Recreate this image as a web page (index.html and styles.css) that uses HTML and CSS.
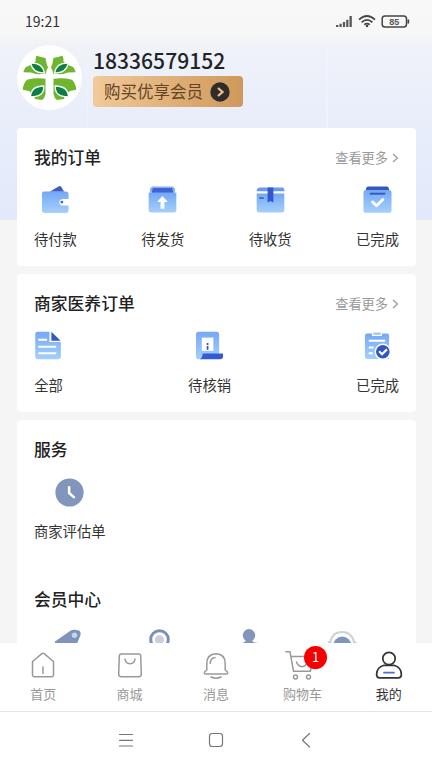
FILE: index.html
```html
<!DOCTYPE html>
<html lang="zh-CN">
<head>
<meta charset="utf-8">
<title>我的</title>
<link rel="stylesheet" href="styles.css">
</head>
<body>
<svg width="0" height="0" class="defs">
  <defs>
    <linearGradient id="blue" x1="0" y1="0" x2="0" y2="1"><stop offset="0" stop-color="#74a8f5"/><stop offset="1" stop-color="#a6d0fa"/></linearGradient>
    <g id="leaves">
      <path fill="#6fb52e" d="M19.500 10.700Q24 12 28.500 13Q29 18 31 22.500L29.500 25.500L29 28.500Q23 29.500 19 29L14 27.500L6.300 27.300Q7 24 9 22L15 19.500L18.500 16.500Q18 13 19.500 10.700Z"/>
      <path fill="#0b8045" stroke="#fff" stroke-width="1.300" d="M13.500 18Q25.500 17.500 27.500 27.800Q16.500 29 13.500 18Z"/>
      <path fill="#6fb52e" d="M28.500 33.700V49Q28 53 25 55L18 54Q17 49 12 46L5.700 44.700Q6.500 38 10 34.700Q18 32.500 28.500 33.700Z"/>
      <path fill="#0b8045" stroke="#fff" stroke-width="1.300" d="M26.800 41Q27.500 52 13.500 51.800Q14 41 26.800 41Z"/>
    </g>
  </defs>
</svg>
<div class="app">
  <header class="hero">
    <div class="status">
      <span class="time">19:21</span>
      <svg class="status-icons" width="76" height="16" viewBox="0 0 76 16">
        <g fill="#555"><path d="M1 14v-2h2.400v2zM4.500 14v-3.200h2.200V14zM7.900 14V9h2.200v5zM11.200 14V6.800h2.200V14zM14.500 14V3h2.300v11z"/></g>
        <g fill="none" stroke="#444" stroke-width="1.700"><path d="M24 6.600Q32-.6 40 6.600M26.600 9.300Q32 4.600 37.400 9.300M29.200 11.700Q32 9.500 34.800 11.700"/><rect x="47.200" y="3" width="24.300" height="11" rx="2.800" stroke-width="1.500"/></g>
        <circle cx="32" cy="13" r="1.300" fill="#444"/><rect x="72.500" y="6.500" width="1.700" height="4" fill="#444"/>
        <text x="59.300" y="11.700" class="battery">85</text>
      </svg>
    </div>
    <div class="profile">
      <svg class="avatar" width="66" height="66" viewBox="0 0 66 66">
        <circle cx="32.500" cy="32.700" r="32.500" fill="#fff"/>
        <use href="#leaves"/>
        <use href="#leaves" transform="matrix(-1 0 0 1 65 0)"/>
      </svg>
      <div class="identity">
        <div class="phone">18336579152</div>
        <div class="vip"><span>购买优享会员</span>
          <svg width="20" height="20" viewBox="0 0 20 20"><circle cx="10" cy="10" r="9.700" fill="#2e2c2b"/><path d="M8 6l4.500 4L8 14" fill="none" stroke="#ecc08a" stroke-width="2.300"/></svg>
        </div>
      </div>
    </div>
  </header>
  <main class="content">
    <section class="card">
      <div class="head"><h2>我的订单</h2><div class="more">查看更多<svg width="7" height="10" viewBox="0 0 7 10"><path d="M1 1l4.500 4L1 9" fill="none" stroke="#999" stroke-width="1.200"/></svg></div></div>
      <div class="items">
        <div class="item">
          <svg width="30" height="30" viewBox="0 0 30 30"><path fill="#3f5dbb" d="M9 7L18.500 1.300Q20 .7 21 2L24 7Z"/><path fill="url(#blue)" d="M3 6.800H26Q28.500 7 28.500 9.500V14.500H22.500Q19 15 19 17.800Q19 21 22.500 21.200H28.500V26.500Q28.500 29 26 29H3.500Q1 29 1 26.500V9Q1 6.800 3 6.800Z"/><circle cx="21.600" cy="17.700" r="1.500" fill="#4267b5"/></svg>
          <span>待付款</span>
        </div>
        <div class="item">
          <svg width="30" height="30" viewBox="0 0 30 30"><path fill="#3f63d5" d="M4 2H26V9H4Z"/><path fill="#89b3f6" d="M4 1.500H26L28 4V9H2V4ZM5 3L3.800 8H26.200L25 3Z" fill-rule="evenodd"/><path fill="url(#blue)" d="M.7 8H29.300V26.500Q29.300 28.500 27 28.500H3Q.7 28.500.7 26.500Z"/><path fill="#fff" d="M15 11.500L20.500 17.500H17V24.500H13V17.500H9.500Z"/></svg>
          <span>待发货</span>
        </div>
        <div class="item">
          <svg width="30" height="30" viewBox="0 0 30 30"><path fill="#699af0" d="M3 2.500H27Q29.500 2.500 29.500 6.500H.5Q.5 3.500 3 2.500Z"/><path fill="url(#blue)" d="M.7 8.700H29.300V26Q29.300 28.500 27 28.500H3Q.7 28.500.7 26Z"/><path fill="#3456cf" d="M12 2.500H18V18L15 16.500L12 18Z"/><path stroke="#3e64c9" stroke-width="1.800" d="M3.300 13.500H8"/></svg>
          <span>待收货</span>
        </div>
        <div class="item">
          <svg width="30" height="30" viewBox="0 0 30 30"><path fill="#3456bd" d="M5 1.500H25Q27 2 27 6H3Q3 2 5 1.500Z"/><path fill="url(#blue)" d="M3 5.200H27Q29.500 5.200 29.500 8V26Q29.500 28.800 27 28.800H3Q.5 28.800.5 26V8Q.5 5.200 3 5.200Z"/><path stroke="#315ac1" stroke-width="2" d="M7 9H23"/><path fill="none" stroke="#fff" stroke-width="3" stroke-linecap="round" stroke-linejoin="round" d="M9.800 17.500L14 21.500L20.500 15"/></svg>
          <span>已完成</span>
        </div>
      </div>
    </section>
    <section class="card">
      <div class="head"><h2>商家医养订单</h2><div class="more">查看更多<svg width="7" height="10" viewBox="0 0 7 10"><path d="M1 1l4.500 4L1 9" fill="none" stroke="#999" stroke-width="1.200"/></svg></div></div>
      <div class="items">
        <div class="item">
          <svg width="30" height="30" viewBox="0 0 30 30"><path fill="url(#blue)" d="M3.500.7H16V11.500H27.800V26.500Q27.800 29.300 25 29.300H4Q1.300 29.300 1.300 26.500V3Q1.300.7 3.500.7Z"/><path fill="#3657c4" d="M18 .8L27.500 10.200H18Z"/><path stroke="#fff" stroke-width="2.200" d="M4.500 9H13.500M4.500 16.300H23M4.500 23H23"/></svg>
          <span>全部</span>
        </div>
        <div class="item">
          <svg width="30" height="30" viewBox="0 0 30 30"><path fill="url(#blue)" d="M4 .7H22Q25 .7 25 4V25H8L6 29.300H4Q1 29 1 26V4Q1 .7 4 .7Z"/><path fill="#fff" d="M7 6.800H19V20.500H7Z"/><path fill="#355ad6" d="M8 23.200H29V27Q28.500 29.300 26 29.300H5Q7.500 28 8 23.200Z"/><path stroke="#3950a9" stroke-width="1.800" d="M13 12.500v2M13 15.500v4"/></svg>
          <span>待核销</span>
        </div>
        <div class="item">
          <svg width="30" height="30" viewBox="0 0 30 30"><path fill="url(#blue)" d="M4 2.500H25Q27 2.500 27 5V29H4Q2 29 2 26.500V5Q2 2.500 4 2.500Z"/><path fill="#9fc3f8" stroke="#fff" stroke-width="1.200" d="M10 1h9v3.500h-9z"/><path stroke="#fff" stroke-width="2" d="M6 10H23M6 17H11M6 23H10"/><circle cx="20.500" cy="21.500" r="7.800" fill="#3155c6" stroke="#fff" stroke-width="1.500"/><path fill="none" stroke="#fff" stroke-width="2.200" d="M16.700 21L19.700 24L24.800 19"/></svg>
          <span>已完成</span>
        </div>
      </div>
    </section>
    <section class="card services">
      <div class="head"><h2>服务</h2></div>
      <div class="items">
        <div class="item">
          <svg width="30" height="30" viewBox="0 0 30 30"><circle cx="15" cy="15" r="14.600" fill="#8295ba"/><path fill="none" stroke="#fff" stroke-width="2.600" stroke-linecap="round" stroke-linejoin="round" d="M14.600 9.500V15.500L19.500 19.800"/></svg>
          <span>商家评估单</span>
        </div>
      </div>
      <div class="head member-head"><h2>会员中心</h2></div>
      <div class="members">
        <svg width="30" height="30" viewBox="0 0 30 30"><path fill="#8094ba" d="M1 12.500L16 2Q18 .6 21 .8L25 1.500Q27.300 3 26.500 6L24.500 11L17 29H1Z"/><circle cx="20.500" cy="6.200" r="2.700" fill="#c4d5ef"/></svg>
        <svg width="30" height="30" viewBox="0 0 30 30"><circle cx="14.500" cy="10.500" r="8.800" fill="#fff" stroke="#7b90b8" stroke-width="3"/><circle cx="14.500" cy="10.800" r="4.500" fill="#c9cde0"/></svg>
        <svg width="30" height="30" viewBox="0 0 30 30"><path fill="#b8c3d8" d="M5 14.200Q7 13 12 12.700Q19 12.700 23 14.200V28H5Z"/><path fill="#8296bc" d="M7 14.200Q9 13 10 11H16Q17 13 19 14.200V25H7Z"/><circle cx="13" cy="6.300" r="6.200" fill="#8296bc"/></svg>
        <svg width="30" height="30" viewBox="0 0 30 30"><path d="M3 16Q4 3 15 3Q26 3 27.500 16" fill="none" stroke="#ced1d6" stroke-width="2"/><circle cx="15.300" cy="16.500" r="9" fill="#8195bb"/><path fill="#c5cad5" d="M1 12.500H4V22H1ZM26.500 12.500h3v9h-3z"/></svg>
      </div>
    </section>
  </main>
  <nav class="tabs">
    <div class="tab">
      <svg width="30" height="30" viewBox="0 0 30 30"><path d="M4.500 11.500Q4.500 10.500 5.500 9.700L13.800 2.600Q15 1.700 16.200 2.600L24.500 9.700Q25.500 10.500 25.500 11.500V24Q25.500 25.700 23.800 25.700H6.200Q4.500 25.700 4.500 24ZM15 16V22.500"/></svg>
      <span>首页</span>
    </div>
    <div class="tab">
      <svg width="30" height="30" viewBox="0 0 30 30"><path d="M6.500 3H23.500Q25.500 3 25.700 5L26.300 23Q26.300 25.700 23.800 25.700H6.200Q3.700 25.700 3.700 23L4.300 5Q4.500 3 6.500 3ZM10 8Q10.500 12.500 15 12.700Q19.500 12.500 20 8"/></svg>
      <span>商城</span>
    </div>
    <div class="tab">
      <svg width="30" height="30" viewBox="0 0 30 30"><path d="M5.800 19V12.500Q5.800 3 15 2.700Q24.200 3 24.200 12.500V19L26.500 21Q27.300 23 25 23H5Q2.700 23 3.500 21ZM9.200 12.500Q9.500 7 14 6.500M10 26Q15 28.500 20 26"/></svg>
      <span>消息</span>
    </div>
    <div class="tab">
      <svg width="30" height="30" viewBox="0 0 30 30"><path d="M-1.200 .8H3L6.500 20.200H23.500L26 5.500H4M9.500 11Q11 15.500 15 15.700Q19 15.500 20.500 11"/><circle cx="8.500" cy="26" r="2"/><circle cx="21.500" cy="26" r="2"/></svg>
      <span>购物车</span><b class="badge">1</b>
    </div>
    <div class="tab active">
      <svg width="30" height="30" viewBox="0 0 30 30"><circle cx="15" cy="7.500" r="6.200"/><path d="M10 14.300H20Q27.400 16.500 27.400 23.500Q27.400 26.800 24.500 26.800H5.500Q2.600 26.800 2.600 23.500Q2.600 16.500 10 14.300Z"/><path d="M10 21.700H20" class="accent"/></svg>
      <span>我的</span>
    </div>
  </nav>
  <footer class="system">
    <svg width="16" height="16" viewBox="0 0 16 16"><path d="M1.500 2.500H14.500M1.500 8.300H14.500M1.500 14H14.500"/></svg>
    <svg width="16" height="16" viewBox="0 0 16 16"><rect x="1.500" y="1.500" width="13" height="13" rx="2.700"/></svg>
    <svg width="16" height="16" viewBox="0 0 16 16"><path d="M11.500 1.500L4.500 8.200L11.500 15"/></svg>
  </footer>
</div>
</body>
</html>
```

FILE: styles.css
```css
* { box-sizing: border-box; }
body { margin: 0; background: #f5f5f5; font-family: "Noto Sans CJK SC", sans-serif; color: #333; }
svg { display: block; flex: none; overflow: visible; }
.defs { position: absolute; }
.app { width: 432px; height: 768px; overflow: hidden; display: flex; flex-direction: column; }
.hero {
  height: 220px; flex: none; margin-bottom: -92px;
  background:
    linear-gradient(90deg, transparent 87px, #eef2fd 87px, #eef2fd 88px, transparent 88px, transparent 326px, rgba(240,244,254,.7) 326px, rgba(240,244,254,.7) 328px, transparent 328px) 0 40px no-repeat,
    linear-gradient(180deg, #f8f8f8 0, #f7f7f7 34px, #f0f2f8 45px, #e9eefa 110px, #e2e9fa 220px);
}
.status { height: 40px; display: flex; justify-content: space-between; align-items: flex-start; padding: 12px 21px 0 25px; }
.time { font: 400 14px/18px "Noto Sans CJK SC", sans-serif; color: #333; }
.status-icons { margin-top: 1px; }
.battery { font: bold 9px "Liberation Sans", sans-serif; fill: #555; text-anchor: middle; }
.profile { display: flex; align-items: flex-start; gap: 10px; padding: 5px 17px 0; }
.identity { padding-top: 1px; }
.phone { font-size: 21.100px; font-weight: 500; line-height: 28px; color: #20242a; white-space: nowrap; }
.vip { width: 150px; height: 31px; margin-top: 2px; padding: 0 13px 0 11px; border-radius: 4px; display: flex; align-items: center; justify-content: space-between; background: linear-gradient(90deg, #f1ca99, #cf985b); color: #664526; font-size: 16.500px; line-height: 28px; white-space: nowrap; }
.vip span { margin-top: -2px; }
.content { flex: 1; min-height: 0; overflow: hidden; padding: 0 16px 0 17px; display: flex; flex-direction: column; gap: 8px; }
.card { height: 138px; flex: none; background: #fff; border-radius: 4px; padding: 17px 17px 0; }
.head { height: 24px; display: flex; align-items: center; justify-content: space-between; }
h2 { margin: 0; font-size: 16.800px; line-height: 24px; font-weight: 500; color: #222; }
.more { display: flex; align-items: center; gap: 4px; color: #999; font-size: 13.200px; line-height: 20px; padding-top: 2px; }
.items { display: flex; justify-content: space-between; margin-top: 16px; }
.item { display: flex; flex-direction: column; align-items: center; gap: 15px; font-size: 14.300px; line-height: 20px; }
.item svg { width: 29px; height: 29px; }
.services { height: 300px; }
.services .items { margin-top: 17px; }
.services .item { gap: 14px; }
.member-head { margin-top: 46px; }
.members { display: grid; grid-template-columns: repeat(4, 30px); column-gap: 61px; padding-left: 20px; margin-top: 18px; }
.tabs { height: 69px; flex: none; background: #fff; border-bottom: 1px solid #e6e6e6; display: grid; grid-template-columns: repeat(5, 1fr); }
.tab { position: relative; display: flex; flex-direction: column; align-items: center; padding-top: 8px; gap: 3px; color: #999; font-size: 13px; line-height: 20px; }
.tab svg, .system svg { fill: none; stroke: #999; stroke-width: 1.500; stroke-linecap: round; stroke-linejoin: round; }
.tab.active { color: #333; }
.tab.active svg { stroke: #333; stroke-width: 1.700; }
.tab .accent { stroke: #4d70c8; }
.badge { position: absolute; left: 45px; top: 3px; width: 23px; height: 23px; border-radius: 50%; background: #f90000; color: #fff; text-align: center; font-size: 13px; line-height: 22px; font-weight: 400; }
.system { height: 56px; flex: none; background: #fff; display: flex; justify-content: center; gap: 74px; padding: 20px 0 0; }
.system svg { stroke: #777; stroke-width: 1.200; }
```
